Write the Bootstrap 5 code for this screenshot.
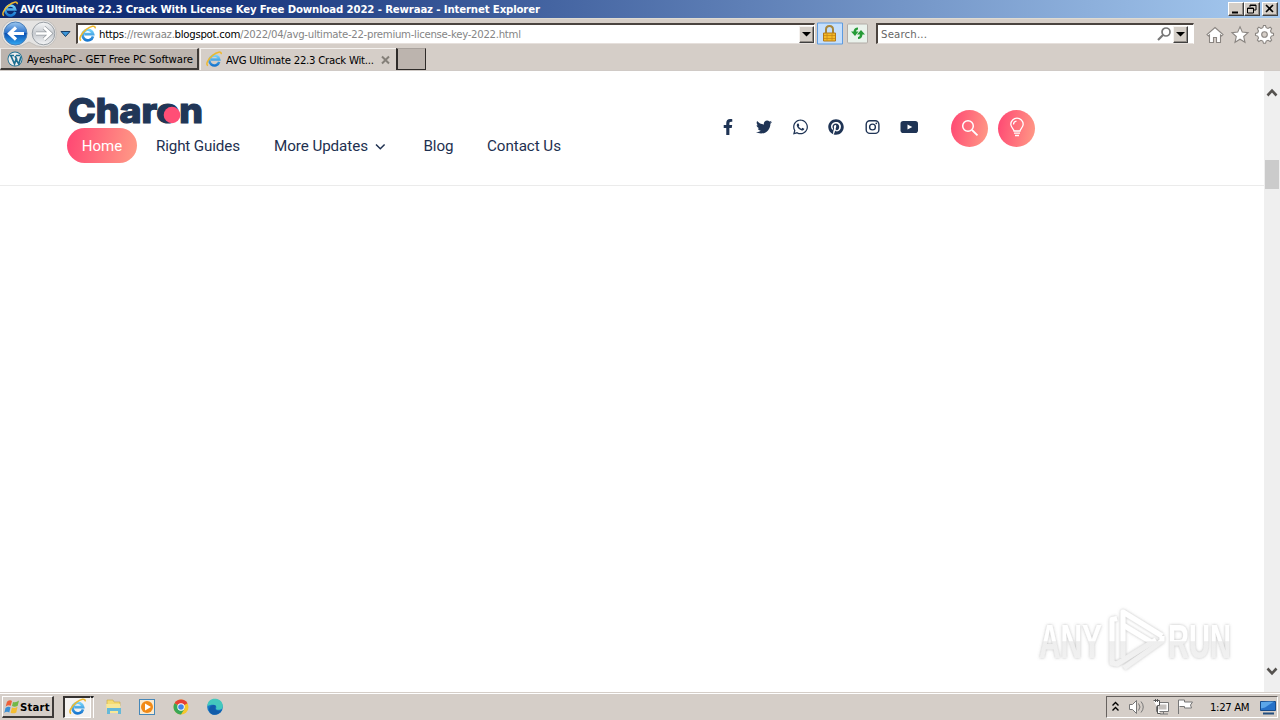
<!DOCTYPE html>
<html lang="en"><head><meta charset="utf-8"><title>AVG Ultimate 22.3 Crack With License Key Free Download 2022 - Rewraaz</title>
<link rel="stylesheet" href="https://cdn.jsdelivr.net/npm/bootstrap@5.3.0/dist/css/bootstrap.min.css">
<style>
html,body{width:1280px;height:720px;overflow:hidden}
body{font:11px/14px "DejaVu Sans Condensed","DejaVu Sans",sans-serif;font-stretch:condensed;color:#000;background:#fff}
svg{display:block;flex:none}
.title-bar{height:18px;background:linear-gradient(90deg,#0d276c,#16347c 16%,#a6caf0);color:#fff;padding:0 2px}
.win-btn{width:16px;height:14px;background:#d4cec7;border:1px solid;border-color:#fff #404040 #404040 #fff;box-shadow:inset -1px -1px #928d88}
.win-close{margin-left:2px}
.tool-row{height:30px;background:#d5cec8;border-top:1px solid #dedbd2;padding-left:2px}
.field{height:21px;background:#fff;border:2px solid;border-color:#4b443f #fff #e6e0dc #4b443f;border-right-width:1px;border-bottom-width:1px}
.drop{width:15px;height:17px;background:#d4cec7;border:1px solid;border-color:#f5f2ef #404040 #404040 #f5f2ef;box-shadow:inset -1px -1px #928d88}
.tab-row{height:23px;background:#d5cec8;border-bottom:1px solid #d0cac6}
.tab-old{width:199px;height:22px;background:#bcb4ae;border:solid;border-width:1px 2px 2px 1px;border-color:#e9e5e1 #3e3a37 #3e3a37 #eee}
.tab-now{width:196px;height:22px;margin-left:1px;border-top:1px solid #f5f2ef;border-left:1px solid #f5f2ef}
.tab-new{width:30px;height:22px;background:#bcb4ae;border:solid #2e2b29;border-width:1px 1px 1px 2px;border-top-color:#a8a19c}
.page{height:621px}
.site-head{height:115px;border-bottom:1px solid #ebebeb;font:15px/37px Roboto,sans-serif;color:#1e3050}
.warm{background:linear-gradient(100deg,#ff4a74 5%,#ff9c86)}
.home-pill{width:70px;height:35px;border-radius:18px;color:#fff;text-align:center}
.round-btn{width:37px;height:37px;border-radius:50%}
.scroller{width:16px;background:#efefef}
.thumb{width:14px;height:29px;background:#cbcbcb}
.task-bar{height:28px;background:#d5cec8;border-top:1px solid #d5cec8;box-shadow:inset 0 1px #fff}
.start{width:52px;height:22px;border:solid;border-width:1px 2px 2px 1px;border-color:#fff #3d3a38 #3d3a38 #fff}
.pressed{width:28px;height:22px;background:#f4f2f0;border:solid;border-width:2px 1px 1px 2px;border-color:#353230 #fff #fff #353230}
.tray{width:172px;height:22px;margin-right:2px;border:1px solid;border-color:#67625f #fff #fff #67625f}
.watermark{left:1030px;top:600px}
.ui{font-family:"DejaVu Sans Condensed","DejaVu Sans",sans-serif;font-size:11.3px}
</style></head><body class="d-flex flex-column position-relative">
<svg width="0" height="0" class="position-absolute"><defs>
<linearGradient id="ieblue" y2="1" x2="0"><stop stop-color="#74d2fa"/><stop offset="1" stop-color="#1877cf"/></linearGradient>
<linearGradient id="blueball" y2="1" x2="0"><stop stop-color="#9dc8ef"/><stop offset=".48" stop-color="#2870cc"/><stop offset=".5" stop-color="#0c51b3"/><stop offset="1" stop-color="#32a9f3"/></linearGradient>
<linearGradient id="greyball" y2="1" x2="0"><stop stop-color="#f6f7f8"/><stop offset=".5" stop-color="#c6cacf"/><stop offset="1" stop-color="#f4f5f7"/></linearGradient>
<symbol id="ie" viewBox="0 0 16 16"><path d="M13.2 10.800A5 5 0 1 1 13.300 8.600H5" fill="none" stroke="url(#ieblue)" stroke-width="2.500"/><path d="M2 14.600C-.8 13.600 2 8.200 6.600 4.400 11 .8 15.600-.2 15.200 3.200" fill="none" stroke="#eeb82e" stroke-width="1.500"/></symbol>
</defs></svg>
<header class="title-bar d-flex align-items-center"><svg width="16" height="16"><use href="#ie"/></svg>
<svg width="530" height="18"><text class="ui" x="2" y="13" textLength="520" fill="#fff" font-weight="bold">AVG Ultimate 22.3 Crack With License Key Free Download 2022 - Rewraaz - Internet Explorer</text></svg>
<div class="d-flex ms-auto align-items-center"><div class="win-btn"><svg width="14" height="12"><path d="M3 9.500h6" stroke="#000" stroke-width="2"/></svg></div><div class="win-btn"><svg width="14" height="12"><path d="M5 4V2h6v5H9M5 2.500h6M2.500 5h6v5h-6zM2 5.500h7" fill="none" stroke="#000"/></svg></div><div class="win-btn win-close"><svg width="14" height="12"><path d="M3 2l7 7m0-7L3 9" stroke="#000" stroke-width="1.600"/></svg></div></div></header>
<nav class="tool-row d-flex align-items-center">
<svg width="74" height="29" viewBox="2 19 74 29"><path d="M15 20h28a13 13 0 0 1 0 27q-6 0-14-5-8 5-14 5a13 13 0 0 1 0-27" fill="#e5e4e3" stroke="#c2beba"/><circle cx="15.500" cy="33.500" r="11.500" fill="url(#blueball)" stroke="#4a7fb8"/><circle cx="43.500" cy="33.500" r="11.300" fill="url(#greyball)" stroke="#999fa5"/><path d="M24 33.500H10m6-6-6.500 6 6.500 6" fill="none" stroke="#fff" stroke-width="3.200"/><path d="M36 33.500h14m-6-6 6.500 6-6.500 6" fill="none" stroke="#979ca1" stroke-width="4"/><path d="M36 33.500h14m-6-6 6.500 6-6.500 6" fill="none" stroke="#fff" stroke-width="2.600"/><path d="M61 31.500h9l-4.500 5z" fill="#3b95d8" stroke="#173d66"/></svg>
<div class="field d-flex align-items-center" style="width:739px"><svg width="19" height="18"><use href="#ie" x="1" y="0" width="17" height="17"/></svg>
<svg width="430" height="18"><text class="ui" x="2" y="12.500" textLength="422" fill="#858585"><tspan fill="#000">https</tspan>://rewraaz.<tspan fill="#000">blogspot.com</tspan>/2022/04/avg-ultimate-22-premium-license-key-2022.html</text></svg><div class="drop ms-auto"><svg width="13" height="15"><path d="M2 5h9L6.500 9.500z"/></svg></div></div>
<div style="margin-left:2px"><svg width="60" height="24" viewBox="817 21.500 60 24"><path d="M817.500 22.500h25v21h-25z" fill="#c5dffc" stroke="#5d9be0"/><path d="M826 33v-4q0-3.500 3.500-3.500t3.500 3.500v4" fill="none" stroke="#a7863b" stroke-width="2"/><path d="M823.500 32.500h12v8h-12z" fill="#f4bb26" stroke="#b3781b"/><path d="M824 35h11m-11 3h11m-8-5v7m5-7v7" stroke="#c98919" stroke-width=".8"/><rect x="847.500" y="23.500" width="20" height="19" rx="1" fill="#eaf2ec" stroke="#b2aca7"/><path d="M858 27q-4 0-4.500 4H851l4 4.500 3.500-4.500H856q.3-2 2-2zM858 38.500q4 0 4.500-4.500h2.500l-4-4.500-4 4.500h3q-.3 2.500-2 2.500z" fill="#269b37"/></svg></div>
<div class="field d-flex align-items-center" style="width:318px;margin-left:-1px"><svg width="100" height="17"><text class="ui" x="3" y="12" textLength="46" fill="#666">Search...</text></svg><svg width="16" height="16" class="ms-auto"><circle cx="9" cy="6" r="4" fill="none" stroke="#777" stroke-width="1.700"/><path d="m6 9-5 5" stroke="#777" stroke-width="2.200"/></svg><div class="drop" style="margin-right:5px"><svg width="13" height="15"><path d="M2 5h9L6.500 9.500z"/></svg></div></div>
<svg width="74" height="24" viewBox="1203 22.500 74 24" style="margin-left:9px"><g fill="#fff" stroke="#8a8581" stroke-width="1.100"><path d="m1215 28 8 7-1.500 1.500-1-1V43h-4v-5h-3v5h-4v-7.500l-1 1-1.500-1.500zM1240 27.300l2.300 5.300 5.700.5-4.300 3.900 1.300 5.800-5-3.100-5 3.100 1.300-5.800-4.300-3.900 5.700-.5z"/><path d="M1263.500 27h2l.7 2.200 1.800.8 2.200-1.200 1.400 1.400-1.100 2.200.8 1.800 2.200.7v2l-2.200.7-.8 1.800 1.100 2.200-1.400 1.400-2.200-1.200-1.800.8-.7 2.200h-2l-.7-2.200-1.800-.8-2.200 1.200-1.400-1.400 1.100-2.200-.8-1.800-2.200-.7v-2l2.200-.7.8-1.800-1.100-2.200 1.400-1.400 2.200 1.200 1.800-.8z" transform="translate(0 -1)"/><circle cx="1264.500" cy="35" r="2.800" fill="#d5cec8"/></g></svg></nav>
<div class="tab-row d-flex"><div class="tab-old d-flex align-items-center"><svg width="26" height="18"><circle cx="14" cy="9" r="7.500" fill="#1b6e90"/><circle cx="14" cy="9" r="6.600" fill="#eee"/><path d="M8.500 5.500H13m2 0h4M10 6l3.500 8 1.500-4.500L17.800 14 20 6.500M14 6l2 4" fill="none" stroke="#1b6e90" stroke-width="1.700"/></svg><svg width="168" height="18"><text class="ui" y="13" textLength="166">AyeshaPC - GET Free PC Software</text></svg></div>
<div class="tab-now d-flex align-items-center"><svg width="25" height="18"><use href="#ie" x="5" y="0" width="16" height="16"/></svg><svg width="153" height="18"><text class="ui" y="12.500" textLength="148">AVG Ultimate 22.3 Crack Wit...</text></svg><svg width="12" height="16"><path d="m3 4.500 7 7m0-7-7 7" stroke="#858079" stroke-width="2"/></svg></div><div class="tab-new"></div></div>
<main class="page d-flex"><div class="flex-grow-1"><div class="site-head d-flex"><div style="width:655px;padding:22px 0 0 67px">
<svg width="200" height="35"><text x="1" y="29.800" textLength="135" lengthAdjust="spacingAndGlyphs" font-family="Inter, sans-serif" font-size="34.500" font-weight="800" fill="#213657" stroke="#213657" stroke-width="1.200">Charon</text><circle cx="102" cy="20.500" r="7.500" fill="#213657"/><circle cx="105" cy="22" r="8.300" fill="#ff4e76"/></svg>
<div class="d-flex"><div class="home-pill warm">Home</div><svg width="450" height="35" fill="#1e3050"><g font-family="Roboto, sans-serif" font-size="15.200"><text x="19" y="23" textLength="84">Right Guides</text><text x="137" y="23" textLength="94">More Updates</text><text x="286.500" y="23" textLength="30">Blog</text><text x="350" y="23" textLength="74">Contact Us</text></g><path d="m239 16.500 4.300 4.200 4.300-4.200" fill="none" stroke="#1e3050" stroke-width="1.500"/></svg></div></div>
<div class="d-flex align-items-center" style="height:115px;padding-left:65px"><svg width="202" height="22" viewBox="720 118 202 22" fill="#1f3455">
<svg x="723" y="119" width="10" height="16" viewBox="0 0 320 512"><path d="M279.140 288l14.220-92.660h-88.910v-60.130c0-25.350 12.420-50.060 52.240-50.060h40.420V6.260S260.430 0 225.360 0c-73.220 0-121.080 44.380-121.080 124.720v70.620H22.890V288h81.390v224h100.170V288z"/></svg>
<svg x="756" y="119" width="16" height="16" viewBox="0 0 512 512"><path d="M459.370 151.716c.325 4.548.325 9.097.325 13.645 0 138.720-105.583 298.558-298.558 298.558-59.452 0-114.680-17.219-161.137-47.106 8.447.974 16.568 1.299 25.340 1.299 49.055 0 94.213-16.568 130.274-44.832-46.132-.975-84.792-31.188-98.112-72.772 6.498.974 12.995 1.624 19.818 1.624 9.421 0 18.843-1.300 27.614-3.573-48.081-9.747-84.143-51.980-84.143-102.985v-1.299c13.969 7.797 30.214 12.670 47.431 13.319-28.264-18.843-46.781-51.005-46.781-87.391 0-19.492 5.197-37.360 14.294-52.954 51.655 63.675 129.300 105.258 216.365 109.807-1.624-7.797-2.599-15.918-2.599-24.040 0-57.828 46.782-104.934 104.934-104.934 30.213 0 57.502 12.670 76.670 33.137 23.715-4.548 46.456-13.320 66.599-25.340-7.798 24.366-24.366 44.833-46.132 57.827 21.117-2.273 41.584-8.122 60.426-16.243-14.292 20.791-32.161 39.308-52.628 54.253z"/></svg>
<svg x="792.500" y="118.500" width="16" height="17" viewBox="0 0 448 512"><path d="M380.900 97.100C339 55.100 283.200 32 223.900 32c-122.400 0-222 99.600-222 222 0 39.100 10.200 77.300 29.600 111L0 480l117.700-30.900c32.400 17.700 68.900 27 106.100 27h.1c122.300 0 224.100-99.600 224.100-222 0-59.300-25.200-115-67.100-157zm-157 341.600c-33.200 0-65.700-8.900-94-25.700l-6.700-4-69.800 18.300L72 359.200l-4.400-7c-18.500-29.400-28.200-63.300-28.200-98.200 0-101.700 82.800-184.500 184.600-184.500 49.300 0 95.600 19.200 130.400 54.100 34.800 34.900 56.200 81.200 56.100 130.500 0 101.800-84.900 184.600-186.600 184.600zm101.200-138.200c-5.500-2.800-32.800-16.200-37.900-18-5.100-1.900-8.800-2.800-12.500 2.800-3.700 5.600-14.300 18-17.600 21.800-3.200 3.700-6.500 4.200-12 1.400-32.600-16.300-54-29.100-75.500-66-5.700-9.800 5.700-9.100 16.300-30.300 1.800-3.700.9-6.900-.5-9.700-1.400-2.800-12.500-30.100-17.100-41.200-4.500-10.800-9.100-9.300-12.500-9.500-3.200-.2-6.900-.2-10.600-.2-3.700 0-9.700 1.400-14.800 6.900-5.100 5.600-19.400 19-19.400 46.300 0 27.300 19.900 53.700 22.600 57.400 2.800 3.700 39.100 59.700 94.800 83.800 35.200 15.200 49 16.500 66.600 13.900 10.700-1.600 32.800-13.400 37.400-26.400 4.600-13 4.600-24.100 3.200-26.400-1.300-2.500-5-3.900-10.500-6.600z"/></svg>
<svg x="828" y="119" width="16" height="16" viewBox="0 0 496 512"><path d="M496 256c0 137-111 248-248 248-25.600 0-50.200-3.900-73.400-11.100 10.100-16.500 25.200-43.500 30.800-65 3-11.600 15.400-59 15.400-59 8.100 15.400 31.700 28.500 56.800 28.500 74.800 0 128.700-68.800 128.700-154.300 0-81.900-66.900-143.200-152.900-143.200-107 0-163.900 71.800-163.900 150.100 0 36.400 19.400 81.700 50.300 96.100 4.700 2.200 7.200 1.200 8.300-3.300.8-3.400 5-20.300 6.900-28.100.6-2.500.3-4.700-1.700-7.100-10.100-12.500-18.300-35.300-18.300-56.600 0-54.700 41.400-107.600 112-107.600 60.900 0 103.600 41.500 103.600 100.900 0 67.100-33.900 113.600-78 113.600-24.300 0-42.600-20.100-36.700-44.800 7-29.500 20.500-61.300 20.500-82.600 0-19-10.200-34.900-31.400-34.900-24.900 0-44.900 25.700-44.900 60.200 0 22 7.400 36.800 7.400 36.800s-24.500 103.800-29 123.200c-5 21.400-3 51.600-.9 71.200C65.400 450.900 0 361.100 0 256 0 119 111 8 248 8s248 111 248 248z"/></svg>
<g fill="none" stroke="#1f3455" stroke-width="1.400"><rect x="866.200" y="120.700" width="12.700" height="12.700" rx="3.700"/><circle cx="872.500" cy="127" r="2.900"/></g><circle cx="876.300" cy="123.300" r=".9"/><rect x="900.500" y="121" width="17.500" height="12" rx="2.800"/><path d="m907.500 124.400 4.800 2.600-4.800 2.600z" fill="#fff"/></svg>
<div class="round-btn warm" style="margin-left:29px"><svg width="37" height="37"><circle cx="17" cy="16" r="5.300" fill="none" stroke="#fff" stroke-width="1.500"/><path d="m21 20 5.500 5.300" stroke="#fff" stroke-width="1.800"/></svg></div><div class="round-btn warm" style="margin-left:10px"><svg width="37" height="37" fill="none" stroke="#fff" stroke-width="1.300"><path d="M16 21c0-2-3.200-3.300-3.200-6.700a6.200 6.200 0 0 1 12.400 0c0 3.400-3.200 4.700-3.200 6.700zM16 23.200h6M17 25.500h4M15.500 14.500c0-2 1-3 3-3.300"/></svg></div></div></div></div>
<aside class="scroller d-flex flex-column align-items-center"><svg width="16" height="89"><path d="m3.500 24.500 4.500-4.800 4.500 4.800" fill="none" stroke="#55524f" stroke-width="2.600"/></svg><div class="thumb"></div><svg width="16" height="30" class="mt-auto"><path d="m3.500 6.500 4.500 4.800 4.500-4.800" fill="none" stroke="#55524f" stroke-width="2.600"/></svg></aside></main>
<footer class="task-bar d-flex align-items-center"><div class="start d-flex align-items-center" style="margin-left:2px"><svg width="17" height="18"><g transform="translate(2 2) skewY(-8)"><path d="M2 3q3-2 5 0L5.700 7.500q-2.500-1.300-5 0z" fill="#ee6038"/><path d="M8 4q3 1.500 6-.5l-1.300 5q-3 1.500-5.700-.5z" fill="#72b848"/><path d="M.5 9q2.500-1.500 5 0L4.300 14q-3-2-5 0z" fill="#3a8fd5"/><path d="M7 9.500q2.500 1.500 5.500 0L11.300 15q-3 1.300-5.700-.5z" fill="#f4bd32"/></g></svg><svg width="31" height="18"><text class="ui" y="13.500" textLength="29.500" font-weight="bold">Start</text></svg></div>
<div class="pressed" style="margin-left:9px"><svg width="26" height="18"><use href="#ie" x="4" y="0" width="17" height="17"/></svg></div><div style="width:3px;height:22px;border-right:1px solid #fff;border-top:2px solid #222"></div>
<svg width="132" height="22" viewBox="94 696 132 22"><path d="M107 700h6l1 2h6v4h-13z" fill="#f5dc73" stroke="#cba83c" stroke-width=".6"/><path d="M106 704h14l1 9h-14z" fill="#f7e797"/><path d="M107 708h14v6h-3v-3h-8v3h-3z" fill="#65b9d9"/><rect x="139.500" y="699.500" width="15" height="15" fill="#f8ead1" stroke="#4687b8"/><circle cx="147" cy="707" r="6" fill="#f18a16"/><path d="m145 703.500 6 3.500-6 3.500z" fill="#fff"/><circle cx="181" cy="707" r="7.500" fill="#f5c72c"/><path d="M181 707 174.500 703.300a7.500 7.500 0 0 1 13 0z" fill="#e64035"/><path d="M181 707 174.500 703.300a7.500 7.500 0 0 0 6.500 11.200l3.700-6z" fill="#39a757"/><circle cx="181" cy="707" r="3.700" fill="#fff"/><circle cx="181" cy="707" r="2.800" fill="#4385e8"/><circle cx="215" cy="707" r="7.800" fill="#1679c5"/><path d="M207.500 706c0-10 15-9 15.300 0 .2 4-5 4.700-7 3 2-3-1.500-6-8.300-3" fill="#43c9bd"/><path d="M209 709c1-4 5-5 7-3-2 3 0 6 6 4-3 6-13 7-13-1" fill="#125caa"/></svg>
<div class="tray ms-auto d-flex align-items-center"><svg width="170" height="20" viewBox="1107 697 170 20"><path d="m1112.500 705.500 3-3 3 3m-6 5 3-3 3 3" fill="none" stroke="#000" stroke-width="1.400"/><g fill="#fff" stroke="#777" stroke-width="1"><path d="M1129.500 704.500h3l4-4v13l-4-4h-3z"/><path d="M1138.500 703.500q3 3.500 0 7m2.500-9q4.500 5.500 0 11" fill="none"/><path d="M1156.500 702.500h12v9h-12zM1160 714h8M1163.500 712v2"/><path d="M1158.500 704.500h8v5h-8z" fill="#c5c1be" stroke="none"/><path d="M1153.500 700.500h6v5h-2v8h3M1155.500 699v3m2-3v3" stroke="#555"/><path d="M1178.500 714v-14h6v2h8l-2 3 1 3h-7v-1.500h-5"/></g><text class="ui" x="1210" y="711" textLength="39.500">1:27 AM</text><path d="M1260.500 701.500h15v9h-15z" fill="#2671c8" stroke="#174b8a"/><path d="m1261 702 13-.5-9 6-4 1z" fill="#5ba6e9"/><path d="M1263 713.500h11" stroke="#234e7e" stroke-width="2"/></svg></div></footer>
<svg class="watermark position-absolute" width="240" height="84" viewBox="1030 600 240 84"><defs><linearGradient id="wm" gradientUnits="userSpaceOnUse" x1="0" x2="0" y1="610" y2="672"><stop stop-color="#fff"/><stop offset=".5" stop-color="#fff"/><stop offset=".51" stop-color="#eee"/><stop offset="1" stop-color="#f3f3f3"/></linearGradient><filter id="soft" x="-10%" y="-15%" width="120%" height="130%"><feDropShadow dx="0" dy="0" stdDeviation="1.500" flood-color="#777" flood-opacity=".5"/></filter></defs><g filter="url(#soft)" fill="url(#wm)"><text x="1039" y="658" textLength="63" lengthAdjust="spacingAndGlyphs" font-family="Liberation Sans Narrow, Liberation Sans, sans-serif" font-size="48" font-weight="bold">ANY</text><text x="1168" y="658" textLength="63" lengthAdjust="spacingAndGlyphs" font-family="Liberation Sans Narrow, Liberation Sans, sans-serif" font-size="48" font-weight="bold">RUN</text><g fill="none" stroke="url(#wm)" stroke-width="5" stroke-linejoin="round"><path d="M1117 618.500 1112 619.500V663l5 1 39-24"/><path d="M1123 658V612L1162 636"/><path d="M1123 625 1156 645"/><path d="M1162 636v5l-38 27"/></g></g></svg>
<script src="https://cdn.jsdelivr.net/npm/bootstrap@5.3.0/dist/js/bootstrap.bundle.min.js"></script>
</body></html>
